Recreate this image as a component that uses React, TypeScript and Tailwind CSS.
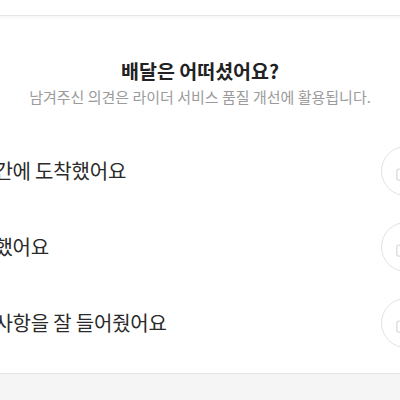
import { ThumbsUp } from "lucide-react";

const items = ["제시간에 도착했어요", "친절했어요", "요청사항을 잘 들어줬어요"];

function RateButton() {
  return (
    <button className="flex h-[50px] w-[50px] shrink-0 items-center justify-center rounded-full border-[1.5px] border-[#e2e2e2] bg-white">
      <ThumbsUp size={22} strokeWidth={1.5} className="text-[#dcdcdc]" />
    </button>
  );
}

export default function App() {
  return (
    <div
      className="flex h-[400px] w-[400px] flex-col overflow-hidden bg-white"
      style={{ fontFamily: '"Noto Sans CJK KR", "Noto Sans", sans-serif' }}
    >
      {/* 상단 헤더 그림자 */}
      <div className="h-[16px] shrink-0 border-b border-[#e6e6e6] bg-white shadow-[0_2px_3px_rgba(0,0,0,0.04)]" />

      {/* 제목 */}
      <div className="flex flex-col items-center pt-[42px]">
        <h2 className="text-[19.5px] font-bold leading-[26px] text-[#222]">배달은 어떠셨어요?</h2>
        <p className="mt-[3px] text-[15px] leading-[20px] text-[#9b9b9b]">
          남겨주신 의견은 라이더 서비스 품질 개선에 활용됩니다.
        </p>
      </div>

      {/* 평가 항목 */}
      <ul className="mt-[26px] flex flex-col">
        {items.map((label) => (
          <li key={label} className="flex h-[76px] items-center justify-between">
            <span className="ml-[-42px] whitespace-nowrap text-[20px] tracking-[-0.2px] text-[#2a2a2a]">{label}</span>
            <div className="mr-[-31px]">
              <RateButton />
            </div>
          </li>
        ))}
      </ul>

      <div className="mt-[12px] flex-grow border-t border-[#e4e4e4] bg-[#f5f5f5]" />
    </div>
  );
}
